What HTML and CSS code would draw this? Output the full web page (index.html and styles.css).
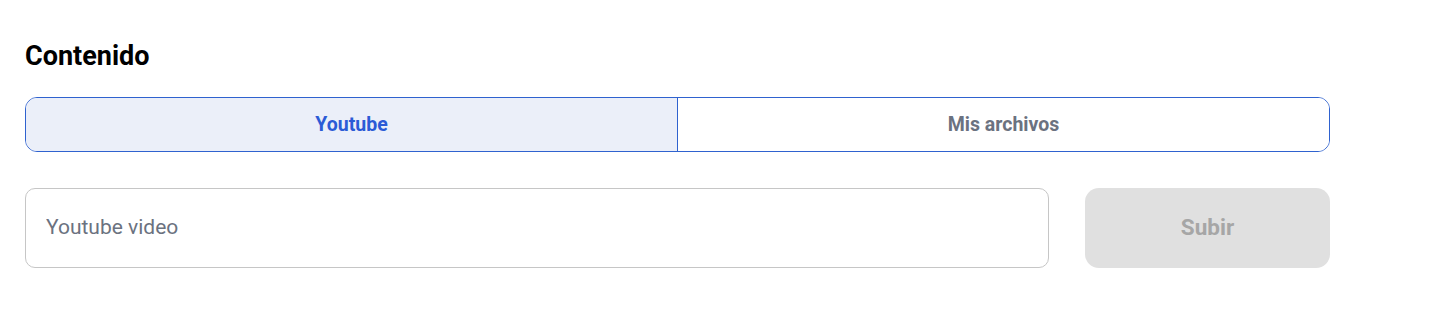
FILE: index.html
```html
<!DOCTYPE html>
<html lang="es">
<head>
<meta charset="utf-8">
<title>Contenido</title>
<link rel="stylesheet" href="styles.css">
</head>
<body>
<div class="page">
  <h2 class="title">Contenido</h2>
  <div class="tabs">
    <button class="tab active">Youtube</button>
    <button class="tab">Mis archivos</button>
  </div>
  <div class="row">
    <input class="field" type="text" placeholder="Youtube video">
    <button class="submit" disabled>Subir</button>
  </div>
</div>
</body>
</html>
```
FILE: styles.css
```css
* { box-sizing: border-box; }
html, body { margin: 0; padding: 0; background: #fff; }
body { font-family: Roboto, "Liberation Sans", Arial, sans-serif; }
.page { width: 1330px; padding: 40px 0 0 25px; }
.title { margin: 0; font-size: 27px; line-height: 32px; font-weight: 700; color: #000; }
.tabs {
  margin-top: 25px;
  display: flex;
  height: 55px;
  border: 1px solid #2f62cf;
  border-radius: 12px;
  overflow: hidden;
}
.tab {
  flex: 1;
  border: 0;
  background: #fff;
  font-family: inherit;
  font-size: 19.5px;
  font-weight: 700;
  color: #6b7280;
  padding: 0;
  cursor: pointer;
}
.tab.active {
  background: #ebeff9;
  color: #2b5bd6;
  border-right: 1px solid #2f62cf;
}
.row { margin-top: 36px; display: flex; gap: 36px; }
.field {
  width: 1024px;
  height: 80px;
  border: 1px solid #c6c6c6;
  border-radius: 10px;
  padding: 0 20px 2px;
  font-family: inherit;
  font-size: 21px;
  color: #333;
  outline: none;
}
.field::placeholder { color: #6b7280; }
.submit {
  width: 245px;
  height: 80px;
  border: 0;
  border-radius: 14px;
  background: #e0e0e0;
  color: #a6a6a6;
  font-family: inherit;
  font-size: 22.5px;
  font-weight: 700;
  padding: 0 0 2px;
}
```
